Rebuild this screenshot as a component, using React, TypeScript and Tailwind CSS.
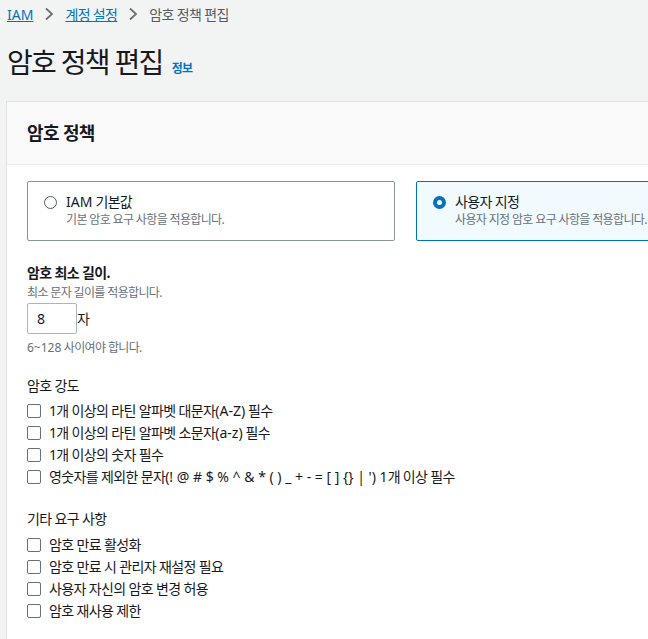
import React from "react";

const Chevron = () => (
  <svg width="10" height="14" viewBox="0 0 10 14" className="mx-[11px]">
    <path d="M2 1.5 L8 7 L2 12.5" fill="none" stroke="#687078" strokeWidth="1.8" />
  </svg>
);

const Checkbox = ({ label }: { label: React.ReactNode }) => (
  <label className="flex h-[22px] items-center">
    <span className="h-[14px] w-[14px] rounded-[2px] border border-[#687078] bg-white" />
    <span className="ml-[8px] text-[14px] leading-5">{label}</span>
  </label>
);

const L = ({ children }: { children: React.ReactNode }) => (
  <span className="tracking-normal">{children}</span>
);

const strength: React.ReactNode[] = [
  <>1개 이상의 라틴 알파벳 대문자<L>(A-Z)</L> 필수</>,
  <>1개 이상의 라틴 알파벳 소문자<L>(a-z)</L> 필수</>,
  <>1개 이상의 숫자 필수</>,
  <>영숫자를 제외한 문자<L>(! @ # $ % ^ & * ( ) _ + - = [ ] {"{}"} | ') 1</L>개 이상 필수</>,
];

const other = [
  "암호 만료 활성화",
  "암호 만료 시 관리자 재설정 필요",
  "사용자 자신의 암호 변경 허용",
  "암호 재사용 제한",
];

export default function App() {
  return (
    <div className="h-[639px] w-full overflow-hidden bg-[#f2f3f3] font-['Noto_Sans','Noto_Sans_CJK_KR',sans-serif] tracking-[-0.04em] text-[#16191f]">
      <div className="pl-[7px]">
        <nav className="flex h-[28px] items-center text-[14px]">
          <a className="text-[#0073bb] tracking-normal underline">IAM</a>
          <Chevron />
          <a className="text-[#0073bb] underline">계정 설정</a>
          <Chevron />
          <span className="text-[#545b64]">암호 정책 편집</span>
        </nav>
        <div className="mt-[16px] flex h-[36px] items-baseline leading-[36px]">
          <h1 className="text-[28px] font-normal tracking-[-0.06em]">암호 정책 편집</h1>
          <a className="ml-[9px] text-[12px] font-bold leading-none text-[#0073bb]">정보</a>
        </div>
      </div>

      <section className="ml-[6px] mt-[21px] w-[798px] border-l border-t border-[#dfe3e3] bg-white">
        <header className="border-b border-[#eaeded] bg-[#fafafa] px-[20px] py-[18px]">
          <h2 className="text-[18px] font-bold leading-[26px]">암호 정책</h2>
        </header>

        <div className="px-[20px] pt-[16px] pb-[30px]">
          <div className="grid grid-cols-2 gap-[21px]">
            <div className="flex rounded-[2px] border border-[#879596] px-[16px] pt-[10px] pb-[12px]">
              <span className="mt-[4px] h-[13px] w-[13px] rounded-full border-[1.5px] border-[#545b64] bg-white" />
              <div className="ml-[9px]">
                <div className="text-[14px] leading-5"><L>IAM</L> 기본값</div>
                <div className="text-[12px] leading-4 text-[#687078]">기본 암호 요구 사항을 적용합니다.</div>
              </div>
            </div>
            <div className="flex rounded-[2px] border border-[#0073bb] bg-[#f1faff] px-[16px] pt-[10px] pb-[12px]">
              <span className="mt-[4px] h-[13px] w-[13px] rounded-full border-[4px] border-[#0073bb] bg-white" />
              <div className="ml-[9px]">
                <div className="text-[14px] leading-5">사용자 지정</div>
                <div className="text-[12px] leading-4 text-[#687078]">사용자 지정 암호 요구 사항을 적용합니다.</div>
              </div>
            </div>
          </div>

          <div className="mt-[22px] text-[14px] font-bold leading-5">암호 최소 길이.</div>
          <div className="mt-[2px] text-[12px] leading-4 text-[#687078]">최소 문자 길이를 적용합니다.</div>
          <div className="mt-[2px] flex items-center">
            <div className="flex h-[31px] w-[50px] items-center rounded-[2px] border border-[#aab7b8] pl-[9px] text-[14px]">
              8
            </div>
            <span className="text-[14px]">자</span>
          </div>
          <div className="mt-[6px] text-[12px] leading-4 text-[#687078]"><L>6~128</L> 사이여야 합니다.</div>

          <div className="mt-[20px] text-[14px] leading-5">암호 강도</div>
          <div className="mt-[4px] flex flex-col">
            {strength.map((s, i) => (
              <Checkbox key={i} label={s} />
            ))}
          </div>

          <div className="mt-[21px] text-[14px] leading-5">기타 요구 사항</div>
          <div className="mt-[5px] flex flex-col">
            {other.map((s) => (
              <Checkbox key={s} label={s} />
            ))}
          </div>
        </div>
      </section>
    </div>
  );
}
